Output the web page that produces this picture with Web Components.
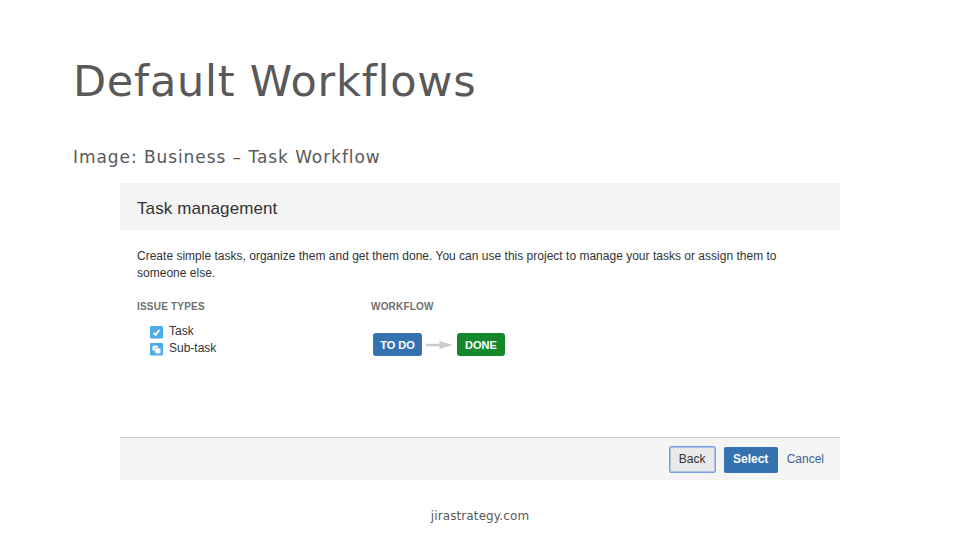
<!DOCTYPE html>
<html lang="en">
<head>
<meta charset="utf-8">
<title>Default Workflows</title>
<style>
  body {
    margin: 0;
    background: #fff;
  }
</style>
</head>
<body>
<workflow-slide>
  <span slot="title">Default Workflows</span>
  <span slot="subtitle">Image: Business – Task Workflow</span>
  <project-dialog>
    <span slot="heading">Task management</span>
    <span slot="description">Create simple tasks, organize them and get them done. You can use this project to manage your tasks or assign them to<br>someone else.</span>
    <issue-type slot="types" kind="task">Task</issue-type>
    <issue-type slot="types" kind="subtask">Sub-task</issue-type>
    <status-lozenge slot="flow" style="--width: 49px">TO DO</status-lozenge>
    <flow-arrow slot="flow"></flow-arrow>
    <status-lozenge slot="flow" style="--width: 48px; --fill: #14892c">DONE</status-lozenge>
    <dialog-button slot="actions" kind="default">Back</dialog-button>
    <dialog-button slot="actions" kind="primary">Select</dialog-button>
    <dialog-button slot="actions" kind="link">Cancel</dialog-button>
  </project-dialog>
  <span slot="footer">jirastrategy.com</span>
</workflow-slide>

<script>
const slideTemplate = document.createElement("template");
slideTemplate.innerHTML = `
<style>
  :host {
    display: flex;
    flex-direction: column;
    box-sizing: border-box;
    width: 960px;
    height: 540px;
    overflow: hidden;
    background: #fff;
    color: #595959;
    font-family: Verdana, "DejaVu Sans", sans-serif;
    font-variant-ligatures: none;
  }
  h1 {
    margin: 54px 0 0 73px;
    font-size: 43px;
    line-height: 54px;
    font-weight: 400;
    letter-spacing: 0.75px;
    white-space: nowrap;
  }
  h2 {
    margin: 38px 0 0 73px;
    font-size: 17px;
    line-height: 22px;
    font-weight: 400;
    letter-spacing: 0.93px;
    white-space: nowrap;
  }
  main {
    margin: 15px 0 0 120px;
  }
  footer {
    margin-top: 27px;
    text-align: center;
    font-size: 12px;
    line-height: 18px;
    letter-spacing: 0.1px;
  }
</style>
<h1><slot name="title"></slot></h1>
<h2><slot name="subtitle"></slot></h2>
<main><slot></slot></main>
<footer><slot name="footer"></slot></footer>
`;

class WorkflowSlide extends HTMLElement {
  connectedCallback() {
    this.attachShadow({ mode: "open" }).appendChild(slideTemplate.content.cloneNode(true));
  }
}

const dialogTemplate = document.createElement("template");
dialogTemplate.innerHTML = `
<style>
  :host {
    display: flex;
    flex-direction: column;
    width: 720px;
    height: 297px;
    color: #333;
    font-family: "Liberation Sans", Arial, sans-serif;
  }
  header {
    height: 47px;
    padding-left: 17px;
    background: #f4f4f4;
    font-size: 17px;
    line-height: 51px;
    letter-spacing: 0.1px;
  }
  section {
    flex: 1;
    padding: 18px 0 0 17px;
  }
  p {
    margin: 0;
    font-size: 12px;
    line-height: 17px;
    letter-spacing: 0.01px;
    white-space: nowrap;
  }
  .columns {
    display: grid;
    grid-template-columns: 234px 1fr;
    margin-top: 18px;
  }
  h3 {
    margin: 0;
    color: #707070;
    font-size: 10px;
    line-height: 14px;
    letter-spacing: 0.2px;
  }
  .types {
    display: flex;
    flex-direction: column;
    padding: 9px 0 0 13px;
  }
  .flow {
    display: flex;
    align-items: center;
    padding: 19px 0 0 2px;
  }
  footer {
    display: flex;
    box-sizing: border-box;
    height: 43px;
    padding: 8px 16px 0 0;
    justify-content: flex-end;
    border-top: 1px solid #ccc;
    background: #f4f4f4;
  }
</style>
<header><slot name="heading"></slot></header>
<section>
  <p><slot name="description"></slot></p>
  <div class="columns">
    <div>
      <h3>ISSUE TYPES</h3>
      <div class="types"><slot name="types"></slot></div>
    </div>
    <div>
      <h3>WORKFLOW</h3>
      <div class="flow"><slot name="flow"></slot></div>
    </div>
  </div>
</section>
<footer><slot name="actions"></slot></footer>
`;

class ProjectDialog extends HTMLElement {
  connectedCallback() {
    this.attachShadow({ mode: "open" }).appendChild(dialogTemplate.content.cloneNode(true));
  }
}

const issueIcons = {
  task: `<path d="M3.4 6.8l2.1 2.1 4-5" fill="none" stroke="#fff" stroke-width="1.8"/>`,
  subtask: `<rect x="2.4" y="2.4" width="5.6" height="5.4" rx="1.6" fill="#fff"/>
    <rect x="5" y="4.9" width="5.8" height="5.8" rx="1.4" fill="#fff" stroke="#4bade8" stroke-width=".5"/>`
};

class IssueType extends HTMLElement {
  connectedCallback() {
    this.attachShadow({ mode: "open" }).innerHTML = `
      <style>
        :host {
          display: flex;
          align-items: center;
          gap: 6px;
          height: 17px;
          font-size: 12px;
          line-height: 17px;
        }
        svg { margin-top: 2px; }
      </style>
      <svg width="13" height="13" viewBox="0 0 13 13">
        <rect width="13" height="12.5" rx="1.2" fill="#4bade8"/>
        ${issueIcons[this.getAttribute("kind")]}
      </svg>
      <span><slot></slot></span>`;
  }
}

class StatusLozenge extends HTMLElement {
  connectedCallback() {
    this.attachShadow({ mode: "open" }).innerHTML = `
      <style>
        :host {
          display: block;
          width: var(--width);
          height: 23px;
          border-radius: 3px;
          background: var(--fill, #3572b0);
          color: #fff;
          font-size: 11px;
          font-weight: 700;
          line-height: 24px;
          text-align: center;
          white-space: nowrap;
        }
      </style>
      <slot></slot>`;
  }
}

class FlowArrow extends HTMLElement {
  connectedCallback() {
    this.attachShadow({ mode: "open" }).innerHTML = `
      <style>
        :host { display: block; margin: 1px 4px 0; }
        svg { display: block; }
      </style>
      <svg width="27" height="8" viewBox="0 0 27 8">
        <path d="M0 2.8h13.5V0L27 4 13.5 8V5.2H0z" fill="#ccc"/>
      </svg>`;
  }
}

class DialogButton extends HTMLElement {
  connectedCallback() {
    this.attachShadow({ mode: "open" }).innerHTML = `
      <style>
        :host {
          display: block;
          box-sizing: border-box;
          height: 26px;
          font-size: 12px;
          line-height: 24px;
          text-align: center;
        }
        :host([kind="default"]) {
          width: 47px;
          height: 27px;
          border: 1px solid #7a9fe0;
          border-radius: 2px;
          background: #e9e9e9;
          box-shadow: inset 0 0 0 1px #a9bfe6;
        }
        :host([kind="primary"]) {
          width: 54px;
          margin: 1px 0 0 8px;
          border-radius: 2px;
          background: #3572b0;
          color: #fff;
          font-weight: 700;
        }
        :host([kind="link"]) {
          margin: 1px 0 0 9px;
          color: #3b5f99;
        }
      </style>
      <slot></slot>`;
  }
}

customElements.define("workflow-slide", WorkflowSlide);
customElements.define("project-dialog", ProjectDialog);
customElements.define("issue-type", IssueType);
customElements.define("status-lozenge", StatusLozenge);
customElements.define("flow-arrow", FlowArrow);
customElements.define("dialog-button", DialogButton);
</script>
</body>
</html>
